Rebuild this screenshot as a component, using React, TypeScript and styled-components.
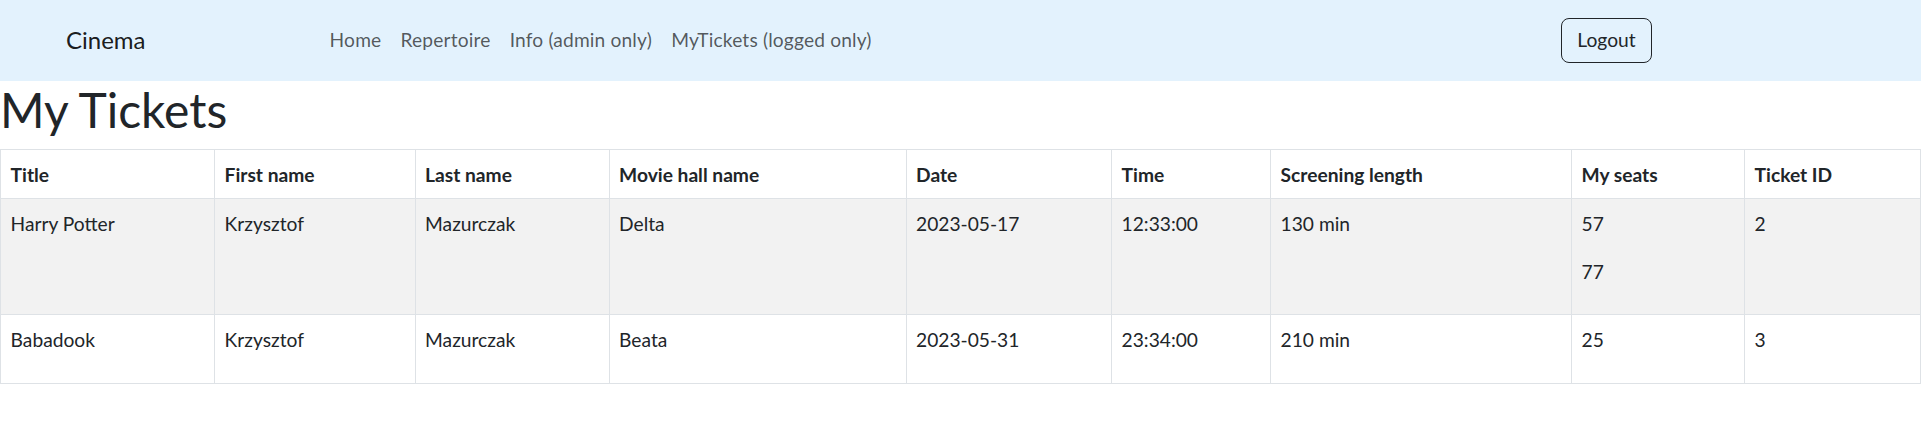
import React from "react";
import styled, { createGlobalStyle } from "styled-components";

const GlobalStyle = createGlobalStyle`
  body {
    margin: 0;
    font-family: Lato, "Open Sans", sans-serif;
    font-size: 19.2px;
    line-height: 28.8px;
    color: #212529;
    background: #ffffff;
  }
  * {
    box-sizing: border-box;
  }
`;

const NavBar = styled.nav`
  height: 81px;
  padding: 16px 269px 20px 66px;
  background-color: #e3f2fd;
  display: grid;
  grid-template-columns: 254px auto 1fr auto;
  align-items: center;
`;

const Brand = styled.a`
  font-size: 24px;
  line-height: 36px;
  padding: 6px 0;
  color: rgba(0, 0, 0, 0.9);
  text-decoration: none;
`;

const NavList = styled.ul`
  display: flex;
  list-style: none;
  margin: 0;
  padding: 0;
`;

const NavLink = styled.a`
  display: block;
  padding: 9.6px;
  letter-spacing: 0.15px;
  color: rgba(0, 0, 0, 0.65);
  text-decoration: none;
`;

const LogoutButton = styled.button`
  grid-column: 4;
  width: 91px;
  height: 45px;
  padding: 0;
  font-family: inherit;
  font-size: 19.2px;
  line-height: 28.8px;
  color: #212529;
  background: transparent;
  border: 1px solid #212529;
  border-radius: 8px;
`;

const Heading = styled.h1`
  margin: 0 0 10.6px;
  font-size: 48px;
  line-height: 57.6px;
  font-weight: 400;
`;

const Table = styled.table`
  width: 1920px;
  table-layout: fixed;
  border-collapse: collapse;
`;

const HeadCell = styled.th`
  padding: 10.4px 9.6px 8.8px;
  text-align: left;
  font-weight: 700;
  border: 1px solid #dee2e6;
`;

const Row = styled.tr<{ $striped?: boolean }>`
  background: ${(p) => (p.$striped ? "#f2f2f2" : "#ffffff")};
`;

const Cell = styled.td`
  padding: 10.4px 9.6px 8.8px;
  vertical-align: top;
  border: 1px solid #dee2e6;
`;

const Seat = styled.p`
  margin: 0 0 19.2px;
`;

const columns = [
  { label: "Title", width: 214 },
  { label: "First name", width: 200.5 },
  { label: "Last name", width: 194 },
  { label: "Movie hall name", width: 297 },
  { label: "Date", width: 205.5 },
  { label: "Time", width: 159 },
  { label: "Screening length", width: 301 },
  { label: "My seats", width: 173 },
  { label: "Ticket ID", width: 176 },
];

const tickets = [
  {
    id: 2,
    title: "Harry Potter",
    firstName: "Krzysztof",
    lastName: "Mazurczak",
    hall: "Delta",
    date: "2023-05-17",
    time: "12:33:00",
    length: 130,
    seats: [57, 77],
  },
  {
    id: 3,
    title: "Babadook",
    firstName: "Krzysztof",
    lastName: "Mazurczak",
    hall: "Beata",
    date: "2023-05-31",
    time: "23:34:00",
    length: 210,
    seats: [25],
  },
];

const App = () => {
  return (
    <>
      <GlobalStyle />
      <NavBar>
        <Brand href="#">Cinema</Brand>
        <NavList>
          <li><NavLink href="#">Home</NavLink></li>
          <li><NavLink href="#">Repertoire</NavLink></li>
          <li><NavLink href="#">Info (admin only)</NavLink></li>
          <li><NavLink href="#">MyTickets (logged only)</NavLink></li>
        </NavList>
        <LogoutButton>Logout</LogoutButton>
      </NavBar>
      <Heading>My Tickets</Heading>
      <Table>
        <colgroup>
          {columns.map((c) => (
            <col key={c.label} style={{ width: c.width }} />
          ))}
        </colgroup>
        <thead>
          <tr>
            {columns.map((c) => (
              <HeadCell key={c.label}>{c.label}</HeadCell>
            ))}
          </tr>
        </thead>
        <tbody>
          {tickets.map((t, i) => (
            <Row key={t.id} $striped={i % 2 === 0}>
              <Cell>{t.title}</Cell>
              <Cell>{t.firstName}</Cell>
              <Cell>{t.lastName}</Cell>
              <Cell>{t.hall}</Cell>
              <Cell>{t.date}</Cell>
              <Cell>{t.time}</Cell>
              <Cell>{t.length} min</Cell>
              <Cell>
                {t.seats.map((s) => (
                  <Seat key={s}>{s}</Seat>
                ))}
              </Cell>
              <Cell>{t.id}</Cell>
            </Row>
          ))}
        </tbody>
      </Table>
    </>
  );
};

export default App;
